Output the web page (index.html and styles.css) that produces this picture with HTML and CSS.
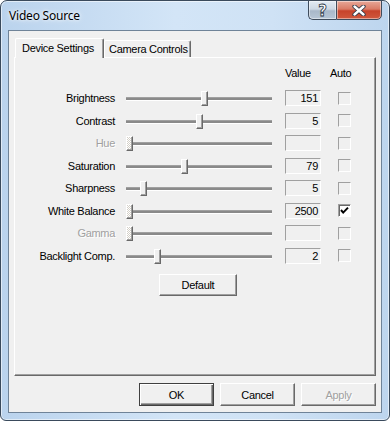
FILE: index.html
```html
<!DOCTYPE html>
<html lang="en">
  <head>
    <meta charset="UTF-8" />
    <title>Video Source</title>
    <link rel="stylesheet" href="styles.css">
  </head>
  <body>
    <div class="window">
      <div class="titlebar">
        <span class="title">Video Source</span>
        <div class="caption-buttons">
          <div class="cap-btn help">?</div>
          <div class="cap-btn close">
            <svg width="14" height="11" viewBox="0 0 14 11">
              <path d="M2.5 1.5 L11.5 9.5 M11.5 1.5 L2.5 9.5" stroke="#2b3645" stroke-width="4.2" stroke-linecap="round" fill="none"/>
              <path d="M2.5 1.5 L11.5 9.5 M11.5 1.5 L2.5 9.5" stroke="#fff" stroke-width="2.4" stroke-linecap="round" fill="none"/>
            </svg>
          </div>
        </div>
      </div>

      <div class="client">
        <div class="tabs">
          <div class="tab tab-active">Device Settings</div>
          <div class="tab">Camera Controls</div>
        </div>

        <div class="panel">
          <div class="heads">
            <span class="head-value">Value</span>
            <span class="head-auto">Auto</span>
          </div>

          <div class="row">
            <div class="label">Brightness</div>
            <div class="slider"><div class="track"></div><div class="thumb" style="left: 75px"></div></div>
            <div class="value">151</div>
            <div class="check"></div>
          </div>
          <div class="row">
            <div class="label">Contrast</div>
            <div class="slider"><div class="track"></div><div class="thumb" style="left: 70px"></div></div>
            <div class="value">5</div>
            <div class="check"></div>
          </div>
          <div class="row row-disabled">
            <div class="label">Hue</div>
            <div class="slider"><div class="track"></div><div class="thumb" style="left: 0px"></div></div>
            <div class="value"></div>
            <div class="check"></div>
          </div>
          <div class="row">
            <div class="label">Saturation</div>
            <div class="slider"><div class="track"></div><div class="thumb" style="left: 55px"></div></div>
            <div class="value">79</div>
            <div class="check"></div>
          </div>
          <div class="row">
            <div class="label">Sharpness</div>
            <div class="slider"><div class="track"></div><div class="thumb" style="left: 14px"></div></div>
            <div class="value">5</div>
            <div class="check"></div>
          </div>
          <div class="row">
            <div class="label">White Balance</div>
            <div class="slider"><div class="track"></div><div class="thumb thumb-dotted" style="left: 0px"></div></div>
            <div class="value">2500</div>
            <div class="check check-on">
              <svg width="9" height="9" viewBox="0 0 9 9">
                <path d="M1 4 L3.2 6.6 L8 1.6" stroke="#000" stroke-width="2" fill="none"/>
              </svg>
            </div>
          </div>
          <div class="row row-disabled">
            <div class="label">Gamma</div>
            <div class="slider"><div class="track"></div><div class="thumb" style="left: 0px"></div></div>
            <div class="value"></div>
            <div class="check"></div>
          </div>
          <div class="row">
            <div class="label">Backlight Comp.</div>
            <div class="slider"><div class="track"></div><div class="thumb" style="left: 28px"></div></div>
            <div class="value">2</div>
            <div class="check"></div>
          </div>

          <button class="btn default-btn">Default</button>
        </div>

        <div class="footer">
          <button class="btn btn-primary">OK</button>
          <button class="btn">Cancel</button>
          <button class="btn btn-disabled">Apply</button>
        </div>
      </div>
    </div>
  </body>
</html>
```

FILE: styles.css
```css
body {
  margin: 0;
  background: #ffffff;
  font-family: "Liberation Sans", Arial, sans-serif;
  font-size: 11px;
  letter-spacing: -0.3px;
  color: #000;
}

.window {
  width: 390px;
  height: 421px;
  box-sizing: border-box;
  border: 1px solid #3a4a5c;
  border-radius: 7px 7px 6px 6px;
  background: linear-gradient(90deg, #bad3ed 0%, #d3e5f7 45%, #cfe2f5 70%, #bdd5ee 100%);
  box-shadow: inset 0 0 0 1px rgba(255, 255, 255, 0.55);
  display: flex;
  flex-direction: column;
}

.titlebar {
  height: 29px;
  display: flex;
  align-items: flex-start;
  justify-content: space-between;
}

.title {
  font-family: "Noto Sans", "Open Sans", sans-serif;
  font-size: 12px;
  margin: 6px 0 0 8px;
  letter-spacing: -0.2px;
  text-shadow: 0 0 6px rgba(255, 255, 255, 0.9), 0 0 3px rgba(255, 255, 255, 0.9);
}

.caption-buttons {
  display: flex;
  margin: -1px 7px 0 0;
}

.cap-btn {
  height: 20px;
  box-sizing: border-box;
  border: 1px solid #3f4c5c;
  display: flex;
  align-items: center;
  justify-content: center;
  box-shadow: inset 0 0 0 1px rgba(255, 255, 255, 0.45);
}

.help {
  width: 28px;
  border-right: none;
  border-radius: 0 0 0 5px;
  background: linear-gradient(#e3ebf3 0%, #cdd8e4 45%, #a9b8c9 55%, #b7c6d6 100%);
  color: #fff;
  font-family: "DejaVu Sans", sans-serif;
  font-weight: bold;
  font-size: 15px;
  letter-spacing: 0;
  -webkit-text-stroke: 0.8px #2b3645;
  padding-top: 1px;
}

.close {
  width: 46px;
  border-radius: 0 0 5px 0;
  background: linear-gradient(#e8a898 0%, #da7b66 45%, #c7432b 55%, #d0583d 100%);
}

.client {
  flex: 1;
  margin: 0 7px 7px 7px;
  border: 1px solid #6f8398;
  background: #f0f0f0;
  padding: 7px 5px 6px 5px;
  display: flex;
  flex-direction: column;
}

.tabs {
  display: flex;
  align-items: flex-end;
  height: 19px;
  padding-left: 1px;
}

.tab {
  height: 17px;
  box-sizing: border-box;
  padding: 0 2px 0 4px;
  white-space: nowrap;
  border-top: 1px solid #fff;
  border-left: 1px solid #fff;
  border-right: 1px solid #696969;
  box-shadow: inset -1px 0 #a0a0a0;
  line-height: 16px;
  border-radius: 2px 2px 0 0;
}

.tab-active {
  height: 20px;
  margin-bottom: -1px;
  background: #f0f0f0;
  position: relative;
  padding: 0 0 0 6px;
  line-height: 18px;
  width: 89px;
}

.panel {
  height: 319px;
  box-sizing: border-box;
  border-top: 1px solid #fff;
  border-left: 1px solid #fff;
  border-right: 1px solid #696969;
  border-bottom: 1px solid #696969;
  box-shadow: inset -1px -1px #a0a0a0;
  display: flex;
  flex-direction: column;
}

.heads {
  height: 29px;
  box-sizing: border-box;
  padding-top: 9px;
  line-height: 13px;
  display: flex;
}

.head-value {
  margin-left: 270px;
  width: 45px;
}

.row {
  height: 22.5px;
  display: flex;
  align-items: center;
}

.label {
  width: 100px;
  text-align: right;
  white-space: nowrap;
}

.row-disabled .label {
  color: #a0a0a0;
  text-shadow: 1px 1px #fff;
}

.slider {
  width: 146px;
  height: 14px;
  margin-left: 11px;
  position: relative;
}

.track {
  margin-top: 6px;
  height: 2px;
  background: #8a8a8a;
  border-top: 1px solid #a0a0a0;
  border-bottom: 1px solid #fff;
}

.thumb {
  position: absolute;
  top: 0;
  width: 7px;
  height: 15px;
  box-sizing: border-box;
  background: #f0f0f0;
  border-top: 1px solid #fff;
  border-left: 1px solid #fff;
  border-right: 1px solid #696969;
  border-bottom: 1px solid #696969;
  box-shadow: inset -1px -1px #a0a0a0;
}

.row-disabled .thumb,
.thumb-dotted {
  background: repeating-conic-gradient(#ffffff 0 25%, #d4d0c8 0 50%) 0 0 / 2px 2px;
}

.value {
  width: 36px;
  height: 16px;
  box-sizing: border-box;
  margin-left: 13px;
  border-top: 1px solid #a0a0a0;
  border-left: 1px solid #a0a0a0;
  border-right: 1px solid #fff;
  border-bottom: 1px solid #fff;
  text-align: right;
  padding-right: 2px;
  line-height: 14px;
}

.check {
  width: 13px;
  height: 13px;
  box-sizing: border-box;
  margin-left: 17px;
  border-top: 1px solid #a0a0a0;
  border-left: 1px solid #a0a0a0;
  border-right: 1px solid #fff;
  border-bottom: 1px solid #fff;
  background: #f0f0f0;
  display: flex;
  align-items: center;
  justify-content: center;
}

.check-on {
  background: #fff;
  box-shadow: inset 1px 1px #696969;
}

.btn {
  font-family: "Liberation Sans", Arial, sans-serif;
  font-size: 11px;
  letter-spacing: -0.3px;
  color: #000;
  background: #f0f0f0;
  box-sizing: border-box;
  width: 75px;
  height: 23px;
  padding: 0;
  border-top: 1px solid #fff;
  border-left: 1px solid #fff;
  border-right: 1px solid #696969;
  border-bottom: 1px solid #696969;
  box-shadow: inset -1px -1px #a0a0a0;
  border-radius: 0;
}

.default-btn {
  width: 78px;
  height: 22px;
  margin: 7px 0 0 144px;
}

.btn-primary {
  border: 1px solid #404040;
  box-shadow: inset 1px 1px #fff, inset -1px -1px #696969, inset -2px -2px #a0a0a0;
}

.btn-disabled {
  color: #a0a0a0;
  text-shadow: 1px 1px #fff;
}

.footer {
  margin-top: 7px;
  display: flex;
  justify-content: flex-end;
  gap: 6px;
}
```
